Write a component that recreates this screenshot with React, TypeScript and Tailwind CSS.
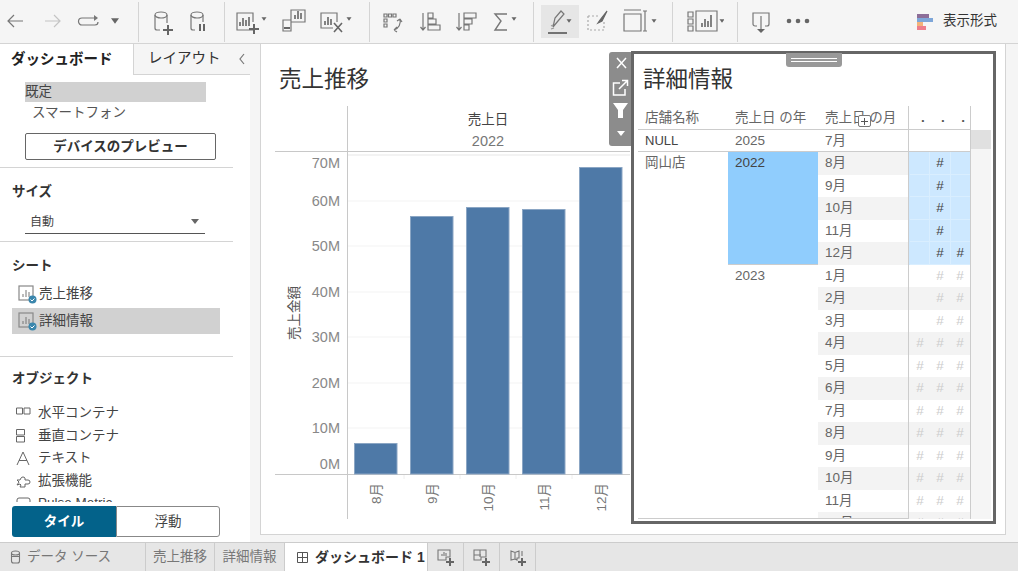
import React from 'react';

const FONT = '"Liberation Sans", "Noto Sans CJK JP", sans-serif';

const Svg = ({ w = 30, children }: { w?: number; children: React.ReactNode }) => (
    <svg width={w} height="30" viewBox={`0 0 ${w} 30`} fill="none" stroke="#777" strokeWidth="1.2" className="shrink-0">
        {children}
    </svg>
);

const Caret = ({ x, y = 14, s = 4 }: { x: number; y?: number; s?: number }) => (
    <path d={`M${x - s} ${y - s * 0.7}h${s * 2}L${x} ${y + s * 0.7}z`} fill="#666" stroke="none" />
);

const Plus = ({ x, y }: { x: number; y: number }) => (
    <path d={`M${x - 5} ${y}h10M${x} ${y - 5}v10`} stroke="#666" strokeWidth="2" />
);

const Divider = () => <div className="w-px h-[40px] bg-[#d4d4d4] shrink-0" />;

const Tool = ({ w, children, active }: { w: number; children: React.ReactNode; active?: boolean }) => (
    <div className={`flex items-center justify-center h-[33px] shrink-0 ${active ? 'bg-[#e6e6e6]' : ''}`} style={{ width: w }}>
        {children}
    </div>
);

const BarGlyph = ({ x, y }: { x: number; y: number }) => (
    <path d={`M${x} ${y}v-4M${x + 3} ${y}v-8M${x + 6} ${y}v-6`} stroke="#666" strokeWidth="1.6" />
);

const Toolbar = () => (
    <div className="h-[44px] bg-[#f5f5f5] border-b border-[#d4d4d4] flex items-center shrink-0">
        <Tool w={34}><Svg><path d="M21 14H6M12 8l-6 6 6 6" /></Svg></Tool>
        <Tool w={38}><Svg><path d="M7 14h15M16 8l6 6-6 6" stroke="#c4c4c4" /></Svg></Tool>
        <Tool w={28}><Svg><path d="M25 11H11a3.500 3.500 0 0 0 0 7h13a3 3 0 0 0 3-3" /><path d="M23 8l4 3-4 3z" fill="#777" stroke="none" /></Svg></Tool>
        <Tool w={30}><Svg><Caret x={15} s={4} /></Svg></Tool>
        <div className="w-[8px] shrink-0" />
        <Divider />
        <Tool w={48}><Svg><ellipse cx="13" cy="8" rx="6" ry="3" /><path d="M7 8v13a2 2 0 0 0 2 2h3M19 8v8" /><Plus x={20} y={23} /></Svg></Tool>
        <Tool w={24}><Svg><ellipse cx="13" cy="8" rx="6" ry="3" /><path d="M7 8v13a2 2 0 0 0 2 2h2M19 8v7" /><path d="M16 17v7M20 17v7" stroke="#666" strokeWidth="2" /></Svg></Tool>
        <div className="w-[13px] shrink-0" />
        <Divider />
        <Tool w={56}><Svg w={38}><path d="M19 23H3V6h16v9" /><BarGlyph x={6} y={19} /><path d="M15 10v9" stroke="#666" strokeWidth="1.6" /><Plus x={20} y={22} /><Caret x={30} y={12} s={2.5} /></Svg></Tool>
        <Tool w={26}><Svg><path d="M12 3h14v12H12zM4 13h8v11H4z" /><BarGlyph x={16} y={12} /><path d="M5 21h6" stroke="#666" strokeWidth="2" /></Svg></Tool>
        <Tool w={56}><Svg w={38}><path d="M17 21H5V6h16v9" /><BarGlyph x={9} y={18} /><path d="M18 16l8 9M26 16l-8 9" stroke="#666" strokeWidth="1.6" /><Caret x={33} y={12} s={2.5} /></Svg></Tool>
        <div className="w-[6px] shrink-0" />
        <Divider />
        <Tool w={46}><Svg><path d="M6 7h3v3H6zM10.500 7h3v3h-3zM15 7h3v3h-3zM6 12h3v3H6zM6 17h3v3H6z" /><path d="M22 12a9 9 0 0 1-6 11M22 12l-3 2M22 12l2 3M16 23l3-3M16 23l3 2" /></Svg></Tool>
        <Tool w={28}><Svg><path d="M8 6v16M5.500 20l2.500 3 2.500-3" /><path d="M13 6h5v5h-5zM13 12h8v5h-8zM13 18h12v5H13z" /></Svg></Tool>
        <Tool w={44}><Svg><path d="M8 6v16M5.500 20l2.500 3 2.500-3" /><path d="M13 6h12v5H13zM13 12h8v5h-8zM13 18h5v5h-5z" /></Svg></Tool>
        <Tool w={34}><Svg w={34}><path d="M19 7H7l6 7-6 9h12" strokeWidth="1.4" /><Caret x={26} y={12} s={2.5} /></Svg></Tool>
        <div className="w-[11px] shrink-0" />
        <Divider />
        <div className="w-[7px] shrink-0" />
        <Tool w={38} active><Svg w={34}><path d="M10 20l2-9 6-7 3 3-6 7z" /><path d="M8 22l3-1M8 19l2-1" stroke="#999" /><path d="M5 26h19" stroke="#666" strokeWidth="1.8" /><Caret x={26} y={14} s={2.5} /></Svg></Tool>
        <Tool w={36}><Svg><path d="M6 9h10M6 9v14h16V14" stroke="#aaa" strokeDasharray="2 2" /><path d="M25 4l-7 9-2 3 4-2z" stroke="#666" fill="#666" /></Svg></Tool>
        <Tool w={50}><Svg w={42}><path d="M5 7h17v17H5zM5 3h17M26 4v20M24 4h4M24 24h4" stroke="#777" /><Caret x={35} y={14} s={2.5} /></Svg></Tool>
        <div className="w-[7px] shrink-0" />
        <Divider />
        <Tool w={64}><Svg w={38}><path d="M2 5h5v5H2zM2 12h5v5H2zM2 19h5v5H2zM10 4h21v20H10z" /><BarGlyph x={16} y={20} /><path d="M25 8v12" stroke="#666" strokeWidth="1.6" /><Caret x={36} y={14} s={2.5} /></Svg></Tool>
        <Divider />
        <Tool w={47}><Svg><path d="M10 19H8a2 2 0 0 1-2-2V6h16v11a2 2 0 0 1-2 2h-2M14 9v14" /><path d="M14 26l-4-4h8z" fill="#666" stroke="none" /></Svg></Tool>
        <Tool w={25}><Svg><circle cx="6" cy="14" r="2.3" fill="#666" stroke="none" /><circle cx="15" cy="14" r="2.3" fill="#666" stroke="none" /><circle cx="24" cy="14" r="2.3" fill="#666" stroke="none" /></Svg></Tool>
        <div className="ml-auto mr-[21px] flex items-center gap-[10px]">
            <div className="flex flex-col w-[16px]">
                <div className="h-[4px] w-[12px] bg-[#8c6d98]" />
                <div className="h-[4px] w-[16px] bg-[#7ea6d8]" />
                <div className="h-[4px] w-[6px] bg-[#f3b27a]" />
                <div className="h-[4px] w-[9px] bg-[#ee7e8b]" />
            </div>
            <span className="text-[13.5px] text-[#333]">表示形式</span>
        </div>
    </div>
);

const SheetIcon = () => (
    <svg width="19" height="19" viewBox="0 0 19 19" fill="none" className="shrink-0 -mr-[3px]">
        <rect x="1" y="1" width="14" height="14" stroke="#888" strokeWidth="1.2" />
        <path d="M5 12V9M8 12V5M11 12V7" stroke="#777" />
        <circle cx="14.5" cy="14.5" r="4" fill="#3b87ad" />
        <path d="M12.500 14.500l1.500 1.500 2.500-2.500" stroke="white" />
    </svg>
);

const ObjIcon = ({ kind }: { kind: number }) => (
    <svg width="16" height="16" viewBox="0 0 16 16" fill="none" stroke="#666" strokeWidth="1" className="shrink-0">
        {kind === 0 && <path d="M.5 3h6v6H.5zM8 3h6v6H8z" />}
        {kind === 1 && <path d="M.5 1.500h8V7H.5zM.5 8.500h8V14H.5z" />}
        {kind === 2 && <path d="M1 15L7 2l6 13M3 10.500h8" />}
        {kind === 3 && <path d="M1 7h3l1-2a2.500 2.500 0 0 1 4 0v2h3a2 2 0 0 1 0 4H9v3H4l1-2-1-1-3 1 2-3z" />}
        {kind === 4 && <rect x="1" y="3" width="13" height="10" rx="2" />}
    </svg>
);

const SectionHead = ({ children }: { children: React.ReactNode }) => (
    <div className="text-[13.5px] font-bold text-[#333] leading-[18px] pl-[12px]">{children}</div>
);

const Hr = () => <div className="h-px w-[233px] bg-[#d4d4d4]" />;

const Sidebar = () => (
    <div className="w-[250px] bg-white flex flex-col shrink-0 relative">
        <div className="flex h-[31px] shrink-0">
            <div className="w-[133px] pl-[11px] text-[14.5px] font-bold text-[#222] leading-[31px]">ダッシュボード</div>
            <div className="flex-1 bg-[#f5f5f5] border-l border-b border-[#d4d4d4] pl-[14px] flex items-center justify-between pr-[4px]">
                <span className="text-[14.5px] text-[#333]">レイアウト</span>
                <svg width="8" height="12" viewBox="0 0 8 12" fill="none" stroke="#777" strokeWidth="1.2"><path d="M6 1L2 6l4 5" /></svg>
            </div>
        </div>
        <div className="pl-[25px] pt-[7px]">
            <div className="w-[181px] h-[20px] bg-[#d1d1d1] text-[13.5px] text-[#444] leading-[20px]">既定</div>
            <div className="h-[22px] pl-[7px] text-[13.5px] text-[#555] leading-[22px]">スマートフォン</div>
            <div className="mt-[9px] w-[191px] h-[27px] border border-[#666] rounded-[2px] text-center text-[13.5px] font-bold text-[#333] leading-[25px]">デバイスのプレビュー</div>
        </div>
        <div className="mt-[7px]"><Hr /></div>
        <div className="mt-[15px]"><SectionHead>サイズ</SectionHead></div>
        <div className="ml-[25px] mt-[9px] w-[180px] h-[24px] border-b border-[#555] pl-[5px] pr-[6px] flex items-center justify-between">
            <span className="text-[12px] text-[#444]">自動</span>
            <span className="w-0 h-0 border-x-[4px] border-x-transparent border-t-[5px] border-t-[#666]" />
        </div>
        <div className="mt-[7px]"><Hr /></div>
        <div className="mt-[15px]"><SectionHead>シート</SectionHead></div>
        <div className="mt-[6px] ml-[12px] w-[208px]">
            <div className="h-[26px] flex items-center gap-[5px] pl-[6px] text-[13.5px] text-[#444]"><SheetIcon />売上推移</div>
            <div className="h-[26px] mt-[1px] flex items-center gap-[5px] pl-[6px] text-[13.5px] text-[#444] bg-[#d1d1d1]"><SheetIcon />詳細情報</div>
        </div>
        <div className="mt-[22px]"><Hr /></div>
        <div className="mt-[13px]"><SectionHead>オブジェクト</SectionHead></div>
        <div className="mt-[14px] h-[100px] overflow-hidden pl-[16px]">
            {['水平コンテナ', '垂直コンテナ', 'テキスト', '拡張機能', 'Pulse Metric'].map((t, i) => (
                <div key={t} className="h-[22.5px] flex items-center gap-[6px] text-[13.5px] text-[#444]"><ObjIcon kind={i} />{t}</div>
            ))}
        </div>
        <div className="absolute left-[12px] top-[462px] w-[208px] h-[31px] flex bg-white text-[13.5px]">
            <div className="w-[104px] bg-[#03628a] rounded-l-[3px] text-white font-bold text-center leading-[31px]">タイル</div>
            <div className="flex-1 border border-[#888] rounded-r-[3px] text-[#444] text-center leading-[29px]">浮動</div>
        </div>
    </div>
);

const TICKS = [
    { l: '70M', y: 168 }, { l: '60M', y: 206 }, { l: '50M', y: 251 }, { l: '40M', y: 297 },
    { l: '30M', y: 342 }, { l: '20M', y: 388 }, { l: '10M', y: 433 }, { l: '0M', y: 469 },
];
const GRID = [155, 201, 246, 292, 337, 383, 428];
const BARS = [
    { x: 354, top: 443, m: '8月' }, { x: 410, top: 216, m: '9月' }, { x: 466, top: 207, m: '10月' },
    { x: 522, top: 209, m: '11月' }, { x: 579, top: 167, m: '12月' },
];

// chart drawn in page coordinates, the viewBox starts where the svg sits on the canvas
const Chart = () => (
    <svg width="369" height="430" viewBox="261 105 369 430" className="block" fontFamily={FONT}>
        {GRID.map(y => <path key={y} d={`M347 ${y}H630`} stroke="#f3f3f3" strokeWidth={y === 155 ? 2 : 1} />)}
        <path d="M347.500 106V519M275 151.500H630M275 474.500H630" stroke="#c8c8c8" />
        {[404, 460, 516, 572].map(x => <path key={x} d={`M${x} 475v4`} stroke="#eee" />)}
        <text x="488" y="124" textAnchor="middle" fontSize="13.5" fill="#444">売上日</text>
        <text x="488" y="146" textAnchor="middle" fontSize="14.5" fill="#777">2022</text>
        {TICKS.map(t => <text key={t.l} x="340" y={t.y} textAnchor="end" fontSize="14.5" fill="#888">{t.l}</text>)}
        <text transform="translate(299 313) rotate(-90)" textAnchor="middle" fontSize="13.5" fill="#555">売上金額</text>
        {BARS.map(b => (
            <g key={b.m}>
                <rect x={b.x + 0.5} y={b.top + 0.5} width="42.5" height={474 - b.top - 0.5} fill="#4e79a7" stroke="#8ba6c4" />
                <text transform={`translate(${b.x + 27} 483) rotate(-90)`} textAnchor="end" fontSize="13.5" fill="#777">{b.m}</text>
            </g>
        ))}
    </svg>
);

const MONTHS = ['8月', '9月', '10月', '11月', '12月', '1月', '2月', '3月', '4月', '5月', '6月', '7月', '8月', '9月', '10月', '11月', '12月'];

const hashCols = (i: number) => {
    if (i < 4) return [false, true, false];
    if (i < 8) return [false, true, true];
    return [true, true, true];
};

const DetailTable = () => (
    <div className="relative h-[413px] overflow-hidden text-[13.5px] text-[#666]">
        <div className="absolute left-[333px] top-[24px] w-[20px] h-[389px] bg-[#f5f5f5]" />
        <div className="absolute left-[333px] top-[24px] w-[20px] h-[19px] bg-[#e0e0e0]" />
        <div className="flex h-[24px] leading-[23px] w-[333px]">
            <div className="w-[90px] pl-[7px] border-b border-[#ccc]">店舗名称</div>
            <div className="w-[90px] pl-[7px] border-b border-[#ccc]">売上日 の年</div>
            <div className="w-[90px] pl-[7px] border-b border-[#ccc]">売上日 の月</div>
            <div className="w-[63px] border-x border-b border-[#ccc] flex justify-between pl-[12px] pr-[5px] font-bold text-[#555]">
                <span>.</span><span>.</span><span>.</span>
            </div>
        </div>
        <div className="flex h-[22px] border-b border-[#ccc] w-[333px] leading-[21px]">
            <div className="w-[90px] pl-[7px] text-[#444] text-[13px]">NULL</div>
            <div className="w-[90px] pl-[7px]">2025</div>
            <div className="w-[90px] pl-[7px]">7月</div>
            <div className="w-[63px] border-x border-[#ccc]" />
        </div>
        <div className="flex w-[333px] relative">
            <div className="w-[90px] pl-[7px] leading-[22px]">岡山店</div>
            <div className="w-[90px]">
                <div className="h-[112.5px] bg-[#90cdfd] pl-[7px] text-[#444] leading-[22px] border-b border-[#ccc]">2022</div>
                <div className="pl-[7px] leading-[22px]">2023</div>
            </div>
            <div className="w-[153px]">
                {MONTHS.map((m, i) => {
                    const selected = i < 5;
                    const zebra = i % 2 === 0;
                    return (
                        <div key={i} className="flex h-[22.5px]">
                            <div className={`w-[90px] pl-[7px] leading-[22px] ${zebra ? 'bg-[#f3f3f3]' : 'bg-white'}`}>{m}</div>
                            <div className={`w-[63px] border-x border-[#ccc] flex pl-px ${selected ? 'bg-[#cde8ff] text-[#444]' : zebra ? 'bg-[#f3f3f3] text-[#ccc]' : 'bg-white text-[#ccc]'}`}>
                                {hashCols(i).map((on, c) => (
                                    <span key={c} className={`flex-1 text-center leading-[22px] ${selected ? 'border-b border-[#d9eeff]' : ''} ${selected && c < 2 ? 'border-r border-r-[#d9eeff]' : ''}`}>{on ? '#' : ''}</span>
                                ))}
                            </div>
                        </div>
                    );
                })}
            </div>
        </div>
        <div className="absolute left-0 top-[412px] w-[270px] h-px bg-[#ccc]" />
        <div className="absolute left-[220px] top-[9px] w-[13px] h-[12px] bg-white border border-[#777] rounded-[2px] flex items-center justify-center">
            <svg width="7" height="7" viewBox="0 0 7 7" stroke="#555"><path d="M0 3.500h7M3.500 0v7" /></svg>
        </div>
    </div>
);

const FloatingPanel = () => (
    <div className="absolute left-[370px] top-[7px] w-[365px] h-[473px] border-[3px] border-[#666] bg-white">
        <div className="absolute left-[152px] -top-[1px] w-[56px] h-[14px] bg-[#999] rounded-b-[3px] flex flex-col justify-center gap-[2px] px-[5px]">
            <div className="h-px bg-white" />
            <div className="h-px bg-white" />
        </div>
        <div className="absolute -left-[25px] -top-[2px] w-[22px] h-[94px] bg-[#8c8c8c] rounded-l-[3px]">
            <svg width="22" height="94" viewBox="0 0 22 94" fill="none" stroke="white" strokeWidth="1.5">
                <path d="M8 6l9 10M17 6l-9 10" />
                <path d="M11 31H4.500v12h11.500v-6M10 37l8-8M13 28.500h5.500V34" />
                <path d="M4 51h15l-5 7v8h-5v-8z" fill="white" stroke="none" />
                <path d="M8 79h8l-4 5z" fill="white" stroke="none" />
            </svg>
        </div>
        <div className="pl-[9px] pt-[11px] h-[52px] text-[22.5px] leading-[30px] text-[#333]">詳細情報</div>
        <div className="pl-[4px]"><DetailTable /></div>
    </div>
);

const Canvas = () => (
    <div className="flex-1 bg-[#f5f5f5] pl-[10px] pr-[12px] pb-[7px] min-w-0">
        <div className="relative h-full bg-white border border-t-0 border-[#d4d4d4]">
            <div className="pl-[18px] pt-[21px] h-[61px] text-[22.5px] leading-[30px] text-[#333]">売上推移</div>
            <Chart />
            <FloatingPanel />
        </div>
    </div>
);

const BottomAdd = ({ children }: { children: React.ReactNode }) => (
    <div className="w-[36px] border-r border-[#ccc] flex items-center justify-center">
        <svg width="20" height="20" viewBox="0 0 20 20" fill="none" stroke="#777" strokeWidth="1.1">
            {children}
            <path d="M10 15h8M14 11v8" stroke="#666" strokeWidth="2" />
        </svg>
    </div>
);

const TabBar = () => (
    <div className="h-[29px] bg-[#e6e6e6] border-t border-[#ccc] flex text-[13.5px] text-[#777] shrink-0">
        <div className="w-[146px] border-r border-[#ccc] pl-[10px] flex items-center gap-[6px]">
            <svg width="11" height="14" viewBox="0 0 11 14" fill="none" stroke="#777" strokeWidth="1.1">
                <ellipse cx="5.5" cy="3" rx="4" ry="2" /><path d="M1.500 3v8a2 2 0 0 0 2 2h4a2 2 0 0 0 2-2V3M1.500 6.500h8" />
            </svg>
            データ ソース
        </div>
        <div className="w-[69px] border-r border-[#ccc] text-center leading-[27px]">売上推移</div>
        <div className="w-[70px] border-r border-[#ccc] text-center leading-[27px]">詳細情報</div>
        <div className="w-[143px] bg-white border-r border-[#ccc] flex items-center gap-[6px] pl-[11px] font-bold text-[14px] text-[#333]">
            <svg width="13" height="13" viewBox="0 0 13 13" fill="none" stroke="#555"><path d="M1.500 1.500h10v10h-10zM6.500 1.500v10M1.500 6.500h10" /></svg>
            ダッシュボード 1
        </div>
        <BottomAdd><path d="M2 3h12v7H10v3H2zM6 9V7M8 9V5M10 9V6" /></BottomAdd>
        <BottomAdd><path d="M2 3h12v7H9v3H2zM8 3v7M2 8h7" /></BottomAdd>
        <BottomAdd><path d="M3 4l4 1.500L11 4v7H9v2L7 12l-4 1zM7 5.500V12M14 4v5" /></BottomAdd>
    </div>
);

const App = () => (
    <div className="w-[1018px] h-[571px] flex flex-col overflow-hidden bg-[#f5f5f5]" style={{ fontFamily: FONT }}>
        <Toolbar />
        <div className="flex flex-1 min-h-0">
            <Sidebar />
            <Canvas />
        </div>
        <TabBar />
    </div>
);

export default App;
